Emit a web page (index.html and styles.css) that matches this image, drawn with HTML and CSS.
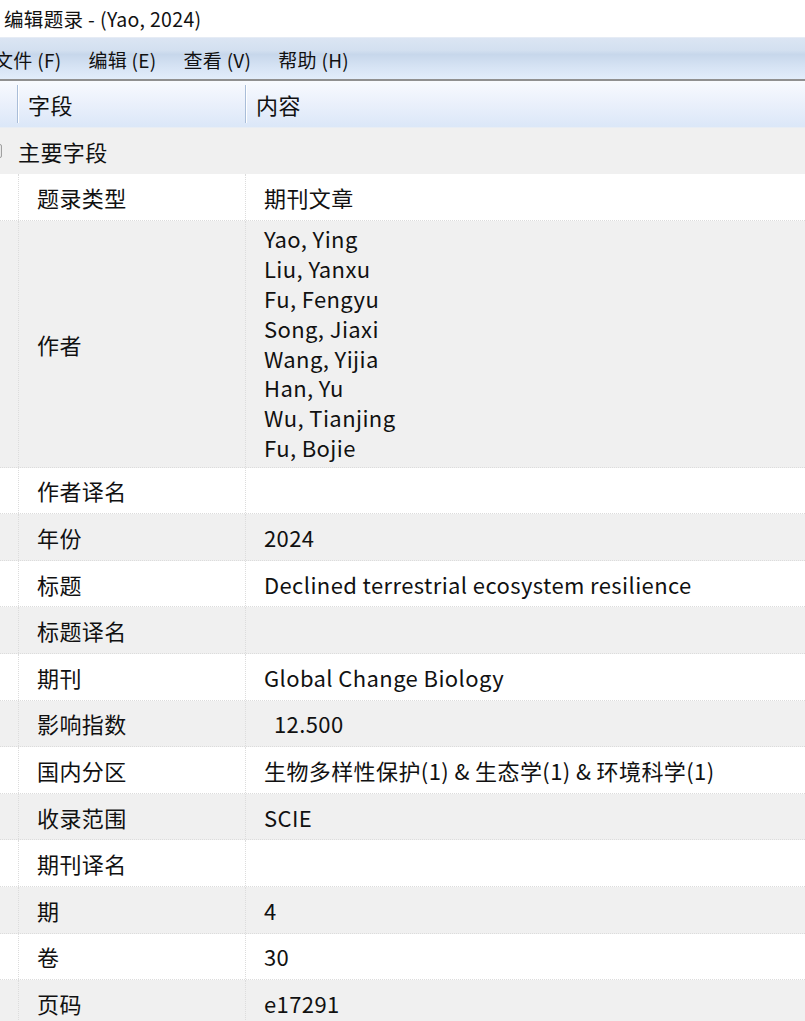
FILE: index.html
```html
<!DOCTYPE html>
<html lang="zh-CN">
<head>
<meta charset="utf-8">
<title>编辑题录</title>
<link rel="stylesheet" href="styles.css">
</head>
<body>
<div class="window">
  <div class="titlebar">编辑题录 - (Yao, 2024)</div>
  <div class="menubar">
    <span class="menu-item first">文件 (F)</span>
    <span class="menu-item">编辑 (E)</span>
    <span class="menu-item">查看 (V)</span>
    <span class="menu-item">帮助 (H)</span>
  </div>
  <div class="grid-header">
    <div class="hcell indent"></div>
    <div class="hcell">字段</div>
    <div class="hcell">内容</div>
  </div>
  <div class="group-row">
    <span class="expander"></span>
    <span class="group-label">主要字段</span>
  </div>
  <div class="rows">
    <div class="row"><div class="cell indent"></div><div class="cell label">题录类型</div><div class="cell value">期刊文章</div></div>
    <div class="row alt tall"><div class="cell indent"></div><div class="cell label">作者</div><div class="cell value authors">
      <div>Yao, Ying</div>
      <div>Liu, Yanxu</div>
      <div>Fu, Fengyu</div>
      <div>Song, Jiaxi</div>
      <div>Wang, Yijia</div>
      <div>Han, Yu</div>
      <div>Wu, Tianjing</div>
      <div>Fu, Bojie</div>
    </div></div>
    <div class="row"><div class="cell indent"></div><div class="cell label">作者译名</div><div class="cell value"></div></div>
    <div class="row alt"><div class="cell indent"></div><div class="cell label">年份</div><div class="cell value">2024</div></div>
    <div class="row"><div class="cell indent"></div><div class="cell label">标题</div><div class="cell value">Declined terrestrial ecosystem resilience</div></div>
    <div class="row alt"><div class="cell indent"></div><div class="cell label">标题译名</div><div class="cell value"></div></div>
    <div class="row"><div class="cell indent"></div><div class="cell label">期刊</div><div class="cell value">Global Change Biology</div></div>
    <div class="row alt"><div class="cell indent"></div><div class="cell label">影响指数</div><div class="cell value impact">12.500</div></div>
    <div class="row"><div class="cell indent"></div><div class="cell label">国内分区</div><div class="cell value">生物多样性保护(1) &amp; 生态学(1) &amp; 环境科学(1)</div></div>
    <div class="row alt"><div class="cell indent"></div><div class="cell label">收录范围</div><div class="cell value">SCIE</div></div>
    <div class="row"><div class="cell indent"></div><div class="cell label">期刊译名</div><div class="cell value"></div></div>
    <div class="row alt"><div class="cell indent"></div><div class="cell label">期</div><div class="cell value">4</div></div>
    <div class="row"><div class="cell indent"></div><div class="cell label">卷</div><div class="cell value">30</div></div>
    <div class="row alt"><div class="cell indent"></div><div class="cell label">页码</div><div class="cell value">e17291</div></div>
  </div>
</div>
</body>
</html>
```

FILE: styles.css
```css
html, body {
  margin: 0;
  padding: 0;
  background: #ffffff;
}

body {
  font-family: "Noto Sans CJK SC", "Noto Sans", sans-serif;
  color: #111111;
  overflow: hidden;
}

.window {
  width: 805px;
  height: 1021px;
  overflow: hidden;
}

/* window caption */
.titlebar {
  height: 38px;
  box-sizing: border-box;
  padding-left: 4px;
  display: flex;
  align-items: center;
  font-size: 19.5px;
  letter-spacing: 0.35px;
  background: #ffffff;
  border-bottom: 1px solid #e6ecf5;
}

/* menu strip */
.menubar {
  height: 43px;
  box-sizing: border-box;
  display: flex;
  align-items: center;
  gap: 27px;
  font-size: 19px;
  letter-spacing: 0.3px;
  background: linear-gradient(to bottom, #dbe5f3 0%, #d3e0f0 30%, #c7d7eb 40%, #d6e3f4 70%, #e2edfb 100%);
  border-bottom: 2px solid #909090;
  padding-top: 2px;
}

.menu-item.first {
  margin-left: -6px;
}

/* column header */
.grid-header {
  height: 47px;
  box-sizing: border-box;
  display: grid;
  grid-template-columns: 17px 228px 1fr;
  align-items: center;
  font-size: 22px;
  letter-spacing: 0.4px;
  background: linear-gradient(to bottom, #f8fafe 0%, #eaf0fb 50%, #dbe7f8 100%);
  border-bottom: 1px solid #e8edf4;
}

.hcell {
  height: 38px;
  display: flex;
  align-items: center;
  padding-left: 10px;
  box-sizing: border-box;
  border-left: 1px solid #a9bdd8;
  box-shadow: inset 1px 0 0 #ffffff;
}

.hcell.indent {
  border-left: none;
  box-shadow: none;
}

/* category row */
.group-row {
  height: 46px;
  box-sizing: border-box;
  display: flex;
  align-items: center;
  background: #f0f0f0;
  font-size: 22px;
  letter-spacing: 0.4px;
  position: relative;
  padding-left: 18px;
}

.expander {
  position: absolute;
  left: -10px;
  top: 16px;
  width: 10px;
  height: 12px;
  border: 1px solid #a0a0a0;
  border-radius: 2px;
  background: #e8e8e8;
}

/* property rows */
.row {
  display: grid;
  grid-template-columns: 19px 227px 1fr;
  height: 46.6px;
  box-sizing: border-box;
  background: #ffffff;
  border-bottom: 1px dotted #dcdcdc;
  font-size: 22px;
  letter-spacing: 0.4px;
}

.row.alt {
  background: #f0f0f0;
}

.row.tall {
  height: 247px;
}

.cell {
  display: flex;
  align-items: center;
  border-right: 1px dotted #dcdcdc;
  box-sizing: border-box;
}

.cell.value {
  border-right: none;
  padding-left: 18px;
}

.cell.label {
  padding-left: 18px;
}

.cell.impact {
  padding-left: 28px;
}

.cell.authors {
  flex-direction: column;
  align-items: flex-start;
  justify-content: center;
  line-height: 29.8px;
}
```
